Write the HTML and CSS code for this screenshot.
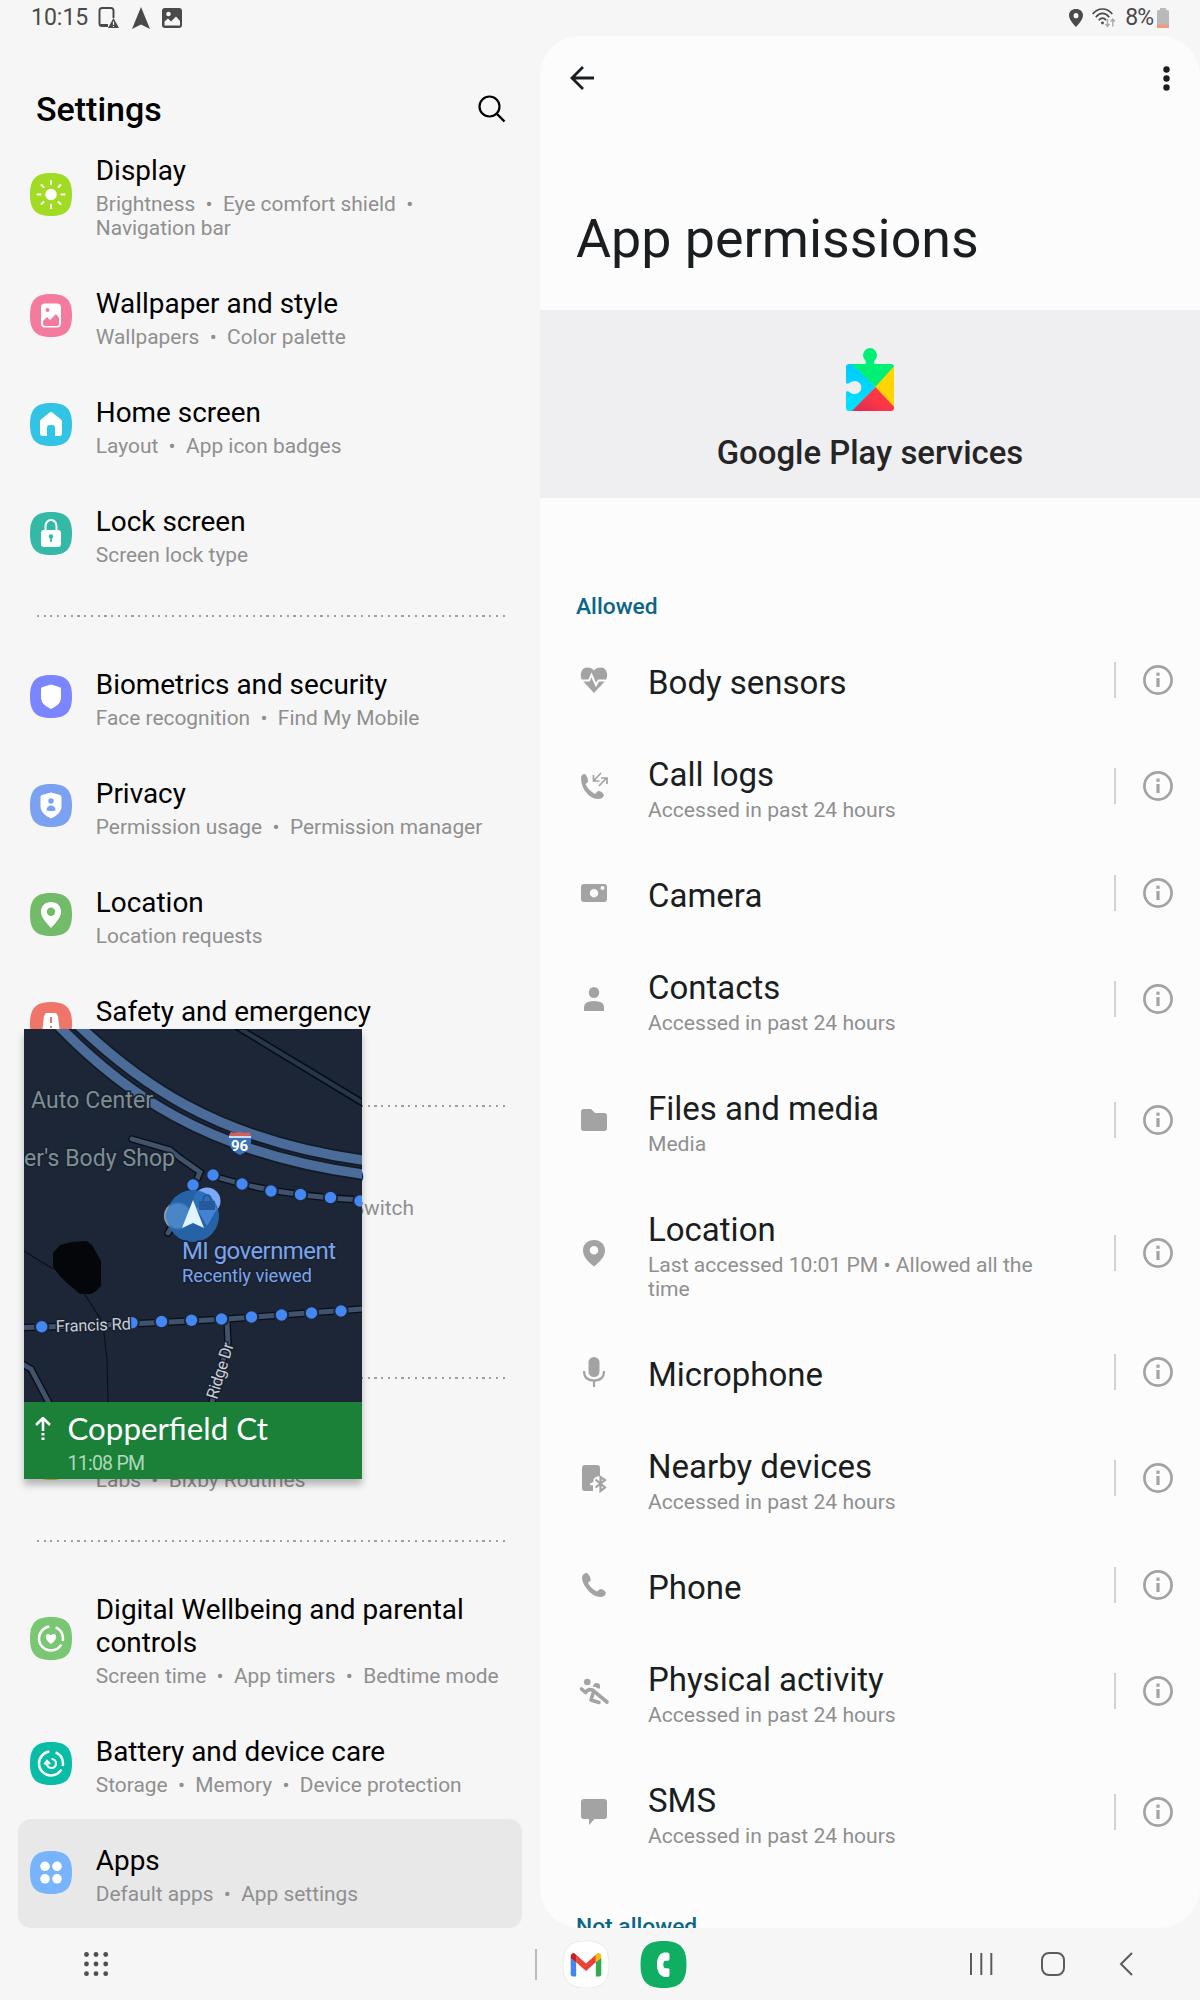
FILE: index.html
```html
<!DOCTYPE html>
<html lang="en">
<head>
<meta charset="utf-8">
<title>Settings</title>
<link rel="stylesheet" href="styles.css">
</head>
<body>
<svg class="defs" aria-hidden="true">
  <defs>
    <path id="squircle" d="M21 0C36 0 42 6 42 21.5S36 43 21 43S0 37 0 21.5S6 0 21 0z"/>
    <symbol id="info" viewBox="0 0 32 32"><circle cx="16" cy="16" r="13.6" fill="none" stroke="#a3a3a3" stroke-width="2.7"/><rect x="14.4" y="14" width="3.2" height="9" fill="#a3a3a3"/><rect x="14.4" y="8.6" width="3.2" height="3.2" fill="#a3a3a3"/></symbol>
  </defs>
</svg>
<header class="status">
  <div class="status-left">
    <span class="clock">10:15</span>
    <svg width="22" height="24" viewBox="0 0 22 24"><path d="M10 20H4a2.5 2.500 0 0 1-2.500-2.500V4.500A2.500 2.500 0 0 1 4 2h9a2.500 2.500 0 0 1 2.500 2.500V12" fill="none" stroke="#4a4a4a" stroke-width="2"/><path d="M2 18h8v3H4z" fill="#4a4a4a"/><path d="M15.500 12L21 22H10z" fill="#4a4a4a"/><path d="M15.500 15.500v3.500M15.500 20v1" stroke="#f6f6f6" stroke-width="1.200"/></svg>
    <svg width="18" height="22" viewBox="0 0 18 22"><path d="M9 0l9 22-9-4.500L0 22z" fill="#4a4a4a"/></svg>
    <svg width="20" height="20" viewBox="0 0 20 20"><rect width="20" height="20" rx="3" fill="#4a4a4a"/><circle cx="6.500" cy="6" r="2.300" fill="#f6f6f6"/><path d="M2.500 13.500l3.500-3 3 3 5-5 4 4.500v4.500h-15.500z" fill="#f6f6f6"/></svg>
  </div>
  <div class="status-right">
    <svg width="14" height="18" viewBox="0 0 15 22" preserveAspectRatio="none"><path fill-rule="evenodd" d="M7.500 0C3 0 0 3.200 0 7.500 0 12.500 4.500 18 7.500 22 10.500 18 15 12.500 15 7.500 15 3.200 12 0 7.500 0zm0 5a2.600 3.200 0 1 1 0 6.400 2.600 3.200 0 0 1 0-6.400z" fill="#4a4a4a"/></svg>
    <svg class="wifi" width="24" height="20" viewBox="0 0 24 20"><g fill="none" stroke="#4a4a4a" stroke-width="1.700"><path d="M.7 6C6-.7 15-.7 20.300 6"/><path d="M3.800 9.200C8 4.200 13 4.200 17.200 9.200"/><path d="M6.800 12.300C9.200 9.500 11.800 9.500 14.200 12.300"/></g><circle cx="10.500" cy="15" r="1.400" fill="#4a4a4a"/><path d="M15.500 11v7.500m-2-2.500l2 2.500 2-2.500M20.800 18.500V11m-2 2.500l2-2.500 2 2.500" fill="none" stroke="#aaa" stroke-width="1.400"/></svg>
    <span class="percent">8%</span>
    <svg width="12" height="20" viewBox="0 0 12 20"><path d="M3 0h6v3H3z" fill="#b9b9b9"/><rect y="2" width="12" height="18" rx="1.500" fill="#b9b9b9"/><path d="M0 16.500h12v2.500q0 1-1 1H1q-1 0-1-1z" fill="#ee9a80"/></svg>
  </div>
</header>
<main class="panes">
  <section class="settings">
    <div class="settings-head">
      <h1>Settings</h1>
      <svg width="28" height="28" viewBox="0 0 28 28"><circle cx="11.500" cy="11.500" r="10" fill="none" stroke="#000" stroke-width="2.200"/><path d="M18.500 18.500l8 8" stroke="#000" stroke-width="2.400"/></svg>
    </div>
    <ul class="menu">
      <li class="item"><svg class="badge" viewBox="0 0 42 43"><use href="#squircle" fill="#a2db24"/><g stroke="#fff" stroke-width="2" stroke-linecap="round"><circle cx="21" cy="21.500" r="5.800" fill="#fff" stroke="none"/><path d="M21 8v3M21 32v3M7.500 21.500h3M31.500 21.500h3M11.500 12l2 2M28.500 29l2 2M11.500 31l2-2M28.500 14l2-2"/></g></svg><div class="text"><h2>Display</h2><p>Brightness &nbsp;•&nbsp; Eye comfort shield &nbsp;•&nbsp;<br>Navigation bar</p></div></li>
      <li class="item"><svg class="badge" viewBox="0 0 42 43"><use href="#squircle" fill="#f47b9d"/><rect x="11" y="9.500" width="20" height="24" rx="4" fill="#fff"/><circle cx="17.500" cy="16" r="2" fill="#f47b9d"/><path d="M13 27l4-4 3 3 6-6 3 4v6q0 2-2 2H15q-2 0-2-2z" fill="#f47b9d"/></svg><div class="text"><h2>Wallpaper and style</h2><p>Wallpapers &nbsp;•&nbsp; Color palette</p></div></li>
      <li class="item"><svg class="badge" viewBox="0 0 42 43"><use href="#squircle" fill="#32c4e5"/><path d="M21 9q1 0 2 1l8 6.500q1 1 1 2V30q0 3-3 3h-4v-8q0-3-3-3h-2q-3 0-3 3v8h-4q-3 0-3-3V18.500q0-1 1-2L19 10q1-1 2-1z" fill="#fff"/></svg><div class="text"><h2>Home screen</h2><p>Layout &nbsp;•&nbsp; App icon badges</p></div></li>
      <li class="item"><svg class="badge" viewBox="0 0 42 43"><use href="#squircle" fill="#34b9a6"/><path d="M15.500 20v-6a5.500 6 0 0 1 11 0v6" fill="none" stroke="#fff" stroke-width="2"/><rect x="11" y="18" width="20" height="17" rx="3" fill="#fff"/><circle cx="21" cy="24.500" r="2.200" fill="#34b9a6"/><path d="M21 25v5" stroke="#34b9a6" stroke-width="1.800"/></svg><div class="text"><h2>Lock screen</h2><p>Screen lock type</p></div></li>
      <li class="rule"></li>
      <li class="item"><svg class="badge" viewBox="0 0 42 43"><use href="#squircle" fill="#7b85ff"/><path d="M21 9.500l8.500 2.500q1.500.500 1.500 2v8c0 6-4 9-10 12-6-3-10-6-10-12v-8q0-1.500 1.500-2z" fill="#fff"/></svg><div class="text"><h2>Biometrics and security</h2><p>Face recognition &nbsp;•&nbsp; Find My Mobile</p></div></li>
      <li class="item"><svg class="badge" viewBox="0 0 42 43"><use href="#squircle" fill="#7aa2f0"/><path d="M21 8.500l9 2.500q1.500.500 1.500 2v9c0 6-4.500 9.500-10.500 12.500-6-3-10.500-6.500-10.500-12.500v-9q0-1.500 1.500-2z" fill="#fff"/><circle cx="21" cy="17" r="2.700" fill="#7aa2f0"/><path d="M16.500 26c0-6 9-6 9 0q0 1-4.500 1t-4.500-1z" fill="#7aa2f0"/></svg><div class="text"><h2>Privacy</h2><p>Permission usage &nbsp;•&nbsp; Permission manager</p></div></li>
      <li class="item"><svg class="badge" viewBox="0 0 42 43"><use href="#squircle" fill="#72bb69"/><path fill-rule="evenodd" d="M21 9C15 9 11 13 11 18.500 11 25 17 30.500 21 35 25 30.500 31 25 31 18.500 31 13 27 9 21 9zm0 5.500a4.200 4.200 0 1 1 0 8.400 4.200 4.200 0 0 1 0-8.400z" fill="#fff"/></svg><div class="text"><h2>Location</h2><p>Location requests</p></div></li>
      <li class="item"><svg class="badge" viewBox="0 0 42 43"><use href="#squircle" fill="#ef7569"/><path d="M16 11h10l2 3 2 17H12l2-17z" fill="#fff"/><path d="M21 15v6M21 24v2" stroke="#ef7569" stroke-width="2"/></svg><div class="text"><h2>Safety and emergency</h2><p>Medical info</p></div></li>
      <li class="rule"></li>
      <li class="item"><svg class="badge" viewBox="0 0 42 43"><use href="#squircle" fill="#5a8df0"/></svg><div class="text"><h2>Accounts and backup</h2><p>Manage accounts &nbsp;•&nbsp; Smart Switch</p></div></li>
      <li class="item"><svg class="badge" viewBox="0 0 42 43"><use href="#squircle" fill="#5a8df0"/></svg><div class="text"><h2>Google</h2><p>Google services</p></div></li>
      <li class="rule"></li>
      <li class="item"><svg class="badge" viewBox="0 0 42 43"><use href="#squircle" fill="#f0c22e"/></svg><div class="text"><h2>Advanced features</h2><p>Labs &nbsp;•&nbsp; Bixby Routines</p></div></li>
      <li class="rule"></li>
      <li class="item"><svg class="badge" viewBox="0 0 42 43"><use href="#squircle" fill="#79c772"/><circle cx="21" cy="21.500" r="12" fill="none" stroke="#fff" stroke-width="2.500" stroke-dasharray="17 4 48 6.400" stroke-dashoffset="14.500"/><path d="M21 27c-7-5-6-10-2.500-10Q20 17 21 18.500 22 17 23.500 17c3.500 0 4.500 5-2.500 10z" fill="#fff"/></svg><div class="text"><h2>Digital Wellbeing and parental controls</h2><p>Screen time &nbsp;•&nbsp; App timers &nbsp;•&nbsp; Bedtime mode</p></div></li>
      <li class="item"><svg class="badge" viewBox="0 0 42 43"><use href="#squircle" fill="#09bca5"/><circle cx="21" cy="21.500" r="12" fill="none" stroke="#fff" stroke-width="2.500" stroke-dasharray="17 4 48 6.400" stroke-dashoffset="14.500"/><path d="M17 21.500a4.500 4.500 0 1 0 4.500-4.500M14.500 22.500l2.500-3.500 3 3" fill="none" stroke="#fff" stroke-width="2.200"/></svg><div class="text"><h2>Battery and device care</h2><p>Storage &nbsp;•&nbsp; Memory &nbsp;•&nbsp; Device protection</p></div></li>
      <li class="item selected"><svg class="badge" viewBox="0 0 42 43"><use href="#squircle" fill="#78b3fd"/><g fill="#fff"><circle cx="15" cy="15.300" r="4.800"/><circle cx="27" cy="15.300" r="4.800"/><circle cx="15" cy="27.800" r="4.800"/><circle cx="27" cy="27.800" r="4.800"/></g></svg><div class="text"><h2>Apps</h2><p>Default apps &nbsp;•&nbsp; App settings</p></div></li>
    </ul>
  </section>
  <section class="detail">
    <div class="toolbar">
      <svg width="25" height="24" viewBox="0 0 25 24"><path d="M13 1L2 12l11 11M2 12h22" fill="none" stroke="#1b1e20" stroke-width="2.800"/></svg>
      <svg width="7" height="25" viewBox="0 0 7 25"><g fill="#1b1e20"><circle cx="3.500" cy="3.500" r="3.200"/><circle cx="3.500" cy="12.500" r="3.200"/><circle cx="3.500" cy="21.500" r="3.200"/></g></svg>
    </div>
    <h1>App permissions</h1>
    <div class="app">
      <svg width="50" height="64" viewBox="0 0 50 64">
        <defs>
          <clipPath id="piece"><path d="M4 16H20.500Q21.500 14 20 12A7 7 0 1 1 30 12Q28.500 14 29.500 16H46Q49 16 49 19V60Q49 63 46 63H4Q1 63 1 60V43.500Q3 42.500 5 44.500A7 6.500 0 1 0 5 34.500Q3 36.500 1 35V19Q1 16 4 16z"/></clipPath>
          <linearGradient id="cyan" x2="0" y2="1"><stop stop-color="#00c3ff"/><stop offset="1" stop-color="#00e2ff"/></linearGradient>
          <linearGradient id="red" x1="1" x2="0" y2="1"><stop stop-color="#ff3945"/><stop offset=".5" stop-color="#fb3745"/><stop offset="1" stop-color="#d8285a"/></linearGradient>
        </defs>
        <g clip-path="url(#piece)"><path d="M0 0V64H7L30.500 39 7 14z" fill="url(#cyan)"/><path d="M7 16V0H50V18L30.500 39z" fill="#00f076"/><path d="M50 17V61L30.500 39z" fill="#ffd400"/><path d="M6 64L30.500 39 51 61V64z" fill="url(#red)"/></g>
      </svg>
      <h2>Google Play services</h2>
    </div>
    <h3>Allowed</h3>
    <ul class="perms">
      <li><svg class="glyph" viewBox="0 0 30 30"><path d="M15 28L3 15C0 9 3 2.500 8 2.500q5 0 7 3 2-3 7-3c5 0 8 6.500 5 12.500z"/><path d="M1 15.500h9l2.500-5.500 4.500 10 2.500-4.500H29" fill="none" stroke="#fcfcfc" stroke-width="2"/></svg><div class="text"><h4>Body sensors</h4></div><svg class="info"><use href="#info"/></svg></li>
      <li><svg class="glyph" viewBox="0 0 30 30"><path d="M2 6Q3 3 6 3 9 6 9 11L6.500 13Q9 19 16 23l3-3q4 0 6 4-1 4-6 4Q12 28 6 20 2 14 2 6z"/><path d="M22 2l-7.500 8M14.500 4v6h6M20 15l7.500-8M22 7h6v6" fill="none" stroke="#a3a3a3" stroke-width="1.700"/></svg><div class="text"><h4>Call logs</h4><p>Accessed in past 24 hours</p></div><svg class="info"><use href="#info"/></svg></li>
      <li><svg class="glyph" viewBox="0 0 30 30"><path fill-rule="evenodd" d="M5 6h20q3 0 3 3v12q0 3-3 3H5q-3 0-3-3V9q0-3 3-3zm10 5a4.200 4.200 0 1 0 .01 0zM23.500 8a2 2 0 1 0 .01 0z"/></svg><div class="text"><h4>Camera</h4></div><svg class="info"><use href="#info"/></svg></li>
      <li><svg class="glyph" viewBox="0 0 30 30"><ellipse cx="15" cy="8.500" rx="5.200" ry="5.500"/><path d="M5 27v-4q0-6 10-6t10 6v4z"/></svg><div class="text"><h4>Contacts</h4><p>Accessed in past 24 hours</p></div><svg class="info"><use href="#info"/></svg></li>
      <li><svg class="glyph" viewBox="0 0 30 30"><path d="M5 4h7l4 4h9q3 0 3 3v12q0 3-3 3H5q-3 0-3-3V7q0-3 3-3z"/></svg><div class="text"><h4>Files and media</h4><p>Media</p></div><svg class="info"><use href="#info"/></svg></li>
      <li class="tall"><svg class="glyph" viewBox="0 0 30 30"><path fill-rule="evenodd" d="M15 2C8.500 2 4 6.500 4 12.500 4 19 9 23.500 15 28.500 21 23.500 26 19 26 12.500 26 6.500 21.500 2 15 2zm0 6a4.300 4.300 0 1 1 0 8.600A4.300 4.300 0 0 1 15 8z"/></svg><div class="text"><h4>Location</h4><p>Last accessed 10:01 PM • Allowed all the<br>time</p></div><svg class="info"><use href="#info"/></svg></li>
      <li><svg class="glyph" viewBox="0 0 30 30"><rect x="9.500" y="0" width="11" height="20" rx="5.500"/><path d="M5 14q0 9.500 10 9.500t10-9.500M15 23.500V30" fill="none" stroke="#a3a3a3" stroke-width="2.200"/></svg><div class="text"><h4>Microphone</h4></div><svg class="info"><use href="#info"/></svg></li>
      <li><svg class="glyph" viewBox="0 0 30 30"><path d="M6 2h12q3 0 3 3v8q-8 1-6.500 6L11 20.500v1.800h3V28H6q-3 0-3-3V5q0-3 3-3z"/><path d="M16.500 16.500l9.500 8-4.500 3.500V14l4.500 3-9.500 7.500" fill="none" stroke="#a3a3a3" stroke-width="2.200"/></svg><div class="text"><h4>Nearby devices</h4><p>Accessed in past 24 hours</p></div><svg class="info"><use href="#info"/></svg></li>
      <li><svg class="glyph" viewBox="0 0 30 30"><path d="M3 7Q4 3 8 3 12 6 11.500 11L9 12.500Q11 18 18 21.500l3-2.500q4 0 6 4-1 4-6 4-8-1-13-8Q3 13 3 7z"/></svg><div class="text"><h4>Phone</h4></div><svg class="info"><use href="#info"/></svg></li>
      <li><svg class="glyph" viewBox="0 0 30 30"><ellipse cx="8.300" cy="6" rx="3.300" ry="3.200"/><path d="M14 11q0-3 2.500-4 4-.5 4.500 2v3.500q-3 .5-4-1.500z"/><path d="M2.500 13l4 3.500q2.500-4 7-2.500L28 26M14 17.500l-2 6.500 8 2.500" fill="none" stroke="#a3a3a3" stroke-width="3.600" stroke-linecap="round" stroke-linejoin="round"/></svg><div class="text"><h4>Physical activity</h4><p>Accessed in past 24 hours</p></div><svg class="info"><use href="#info"/></svg></li>
      <li><svg class="glyph" viewBox="0 0 30 30"><path d="M5 2h20q3 0 3 3v14q0 3-3 3H15.500L10 28v-6H5q-3 0-3-3V5q0-3 3-3z"/></svg><div class="text"><h4>SMS</h4><p>Accessed in past 24 hours</p></div><svg class="info"><use href="#info"/></svg></li>
    </ul>
    <h3 class="second">Not allowed</h3>
  </section>
</main>
<nav class="navbar">
  <svg class="drawer" width="26" height="26" viewBox="0 0 26 26"><g fill="#4f4f4f"><circle cx="3.500" cy="3.500" r="2.400"/><circle cx="13" cy="3.500" r="2.400"/><circle cx="22.700" cy="3.500" r="2.400"/><circle cx="3.500" cy="13" r="2.400"/><circle cx="13" cy="13" r="2.400"/><circle cx="22.700" cy="13" r="2.400"/><circle cx="3.500" cy="22.700" r="2.400"/><circle cx="13" cy="22.700" r="2.400"/><circle cx="22.700" cy="22.700" r="2.400"/></g></svg>
  <span class="sep"></span>
  <svg class="gmail" width="46" height="47" viewBox="0 0 42 43"><use href="#squircle" fill="#fff" stroke="#e6e6e6" stroke-width=".8"/><path d="M7 15l5 4v13.500H9q-2 0-2-2z" fill="#4285f4"/><path d="M35 15l-5 4v13.500h3q2 0 2-2z" fill="#34a853"/><path d="M12 12.500l9 8 9-8v7l-9 8-9-8z" fill="#ea4335"/><path d="M7 14.500q0-3.500 3-3.500l2 1.500v7l-5-4z" fill="#c5221f"/><path d="M35 14.500q0-3.500-3-3.500l-2 1.500v7l5-4z" fill="#fbbc04"/></svg>
  <svg class="dialer" width="47" height="47" viewBox="0 0 42 43"><use href="#squircle" fill="#0fae63"/><path d="M26.500 12.500v4q0 1.500-1.500 1.500h-3q-2.500 3.500 0 7h3q1.500 0 1.500 1.500v4.500q0 2-2 2h-3q-6.500-2-6.500-11.500T21.500 10.500h3q2 0 2 2z" fill="#fff"/></svg>
  <div class="keys">
    <svg width="24" height="26" viewBox="0 0 24 26"><path d="M2 2v22M12.300 2v22M22.300 2v22" stroke="#5c5c5c" stroke-width="2"/></svg>
    <svg width="26" height="26" viewBox="0 0 26 26"><rect x="2" y="2" width="22" height="22" rx="7" fill="none" stroke="#5c5c5c" stroke-width="2"/></svg>
    <svg class="back" width="16" height="26" viewBox="0 0 16 26"><path d="M14 2L3 13l11 11" fill="none" stroke="#5c5c5c" stroke-width="2"/></svg>
  </div>
</nav>
<aside class="pip">
  <svg class="map" width="338" height="373" viewBox="0 0 338 373">
    <rect width="338" height="373" fill="#1c2636"/>
    <path d="M211 0L338 77V70L222 0z" fill="#26364a" stroke="#080d14" stroke-width="1.500"/>
    <g fill="none" stroke="#0b111b" stroke-width="1.200"><path d="M0 222l29 18M60 264l14 22q6 9 6 18l3 27 1 42"/></g>
    <path d="M29 224l7-8 12-3 15-1 5 4 9 16v25l-5 5-5 3H56L43 254l-8-8-6-8z" fill="#04060a"/>
    <g fill="none" stroke="#131b28" stroke-width="13"><path d="M30-8C95 60 180 125 345 146M50-8C110 50 190 112 345 132"/></g>
    <g fill="none" stroke="#4b6b98" stroke-width="9.500"><path d="M30-8C95 60 180 125 345 146M50-8C110 50 190 112 345 132"/></g>
    <g fill="none" stroke="#090e16" stroke-width="7.500" stroke-linecap="round"><path d="M108 110l38 11 10 8 20 14-5 12M144 204l6-10M196 149q60 18 142 22M0 298.500q110-3 203-8.500l135-10M203 292l1 22-16 59M-2 335l9 5 19 36"/></g>
    <g fill="none" stroke="#41536c" stroke-width="4.800" stroke-linecap="round"><path d="M108 110l38 11 10 8 20 14-5 12M144 204l6-10M196 149q60 18 142 22M0 298.500q110-3 203-8.500l135-10M203 292l1 22-16 59M-2 335l9 5 19 36"/></g>
    <g fill="#4387f5" stroke="#1c2636" stroke-width="4" paint-order="stroke"><circle cx="189" cy="146" r="5.700"/><circle cx="218" cy="155" r="5.700"/><circle cx="247" cy="162" r="5.700"/><circle cx="276.500" cy="165.500" r="5.700"/><circle cx="306.500" cy="168.500" r="5.700"/><circle cx="336" cy="172" r="5.700"/><circle cx="169" cy="156" r="5.700"/><circle cx="17.700" cy="297.700" r="5.700"/><circle cx="108" cy="293.700" r="5.700"/><circle cx="137.500" cy="292.500" r="5.700"/><circle cx="167.500" cy="291.300" r="5.700"/><circle cx="197.500" cy="290" r="5.700"/><circle cx="227.500" cy="288" r="5.700"/><circle cx="257.500" cy="286" r="5.700"/><circle cx="287.500" cy="284" r="5.700"/><circle cx="317" cy="282" r="5.700"/></g>
    <circle cx="154" cy="187" r="14" fill="#9a9fa5"/>
    <circle cx="183" cy="172" r="13.500" fill="#7baaf7"/>
    <circle cx="169" cy="187" r="26" fill="#2769b3" fill-opacity=".9"/>
    <circle cx="154" cy="187" r="12.500" fill="#4886c8"/>
    <path d="M183 197l-10-17a12 12 0 0 1 20 0z" fill="#4383d6"/>
    <path d="M179 173q0-7 4-7t4 7" fill="none" stroke="#24599c" stroke-width="2"/><path d="M175 172h16v9h-16z" fill="#24599c"/>
    <path d="M169 171l11 28-11-5-11 5z" fill="#e2f5ff"/>
    <path d="M205 106l2-3 3 1 6-1 6 1 3-1 2 3q2 15-11 20-13-5-11-20z" fill="#3a73bd"/><path d="M205 107l2-4 3 1 6-1 6 1 3-1 2 4z" fill="#d35e5b"/><path d="M205 108h22" stroke="#fff" stroke-width="1.500"/>
    <text class="route" x="215.500" y="121.500" text-anchor="middle">96</text>
    <g class="labels">
      <text class="poi" x="7" y="78.700" textLength="122">Auto Center</text>
      <text class="poi" x="0" y="136.700" textLength="151">er's Body Shop</text>
      <text class="place" x="158" y="229.700" textLength="154">MI government</text>
      <text class="note" x="158" y="253" textLength="130">Recently viewed</text>
      <text class="road" x="32" y="303" textLength="75" transform="rotate(-2 32 303)">Francis Rd</text>
      <text class="road" x="193" y="371" textLength="58" transform="rotate(-73 193 371)">Ridge Dr</text>
    </g>
  </svg>
  <div class="turn">
    <svg width="16" height="24" viewBox="0 0 16 24"><path d="M1 8l7-7 7 7M8 2v12" fill="none" stroke="#fff" stroke-width="2.600"/><path d="M6.500 16h3v2.500h-3zM6.500 20.500h3V23h-3z" fill="#fff"/></svg>
    <div><strong>Copperfield Ct</strong><span>11:08 PM</span></div>
  </div>
</aside>
</body>
</html>
```
FILE: styles.css
```css
* { box-sizing: border-box; }
body {
  margin: 0;
  width: 1200px;
  height: 2000px;
  overflow: hidden;
  position: relative;
  display: flex;
  flex-direction: column;
  background: #f6f6f6;
  color: #000;
  font-family: Roboto, sans-serif;
}
h1, h2, h3, h4, p, ul { margin: 0; padding: 0; }
ul { list-style: none; }
svg { display: block; flex: none; }
.defs { position: absolute; width: 0; height: 0; }

.status {
  flex: none;
  height: 36px;
  display: flex;
  justify-content: space-between;
  padding: 0 31px 0 31px;
  color: #4a4a4a;
  font-size: 23px;
  line-height: 34px;
}
.status-left, .status-right { display: flex; align-items: center; height: 36px; }
.clock { width: 67px; }
.status-left svg { margin-right: 12px; }
.status-right { gap: 9px; }
.status-right .percent { margin-right: -5px; letter-spacing: -1px; }

.panes { flex: none; height: 1892px; display: flex; }
.settings { width: 540px; height: 1892px; overflow: hidden; }
.settings-head {
  height: 93px;
  display: flex;
  align-items: flex-start;
  justify-content: space-between;
  padding: 52px 34px 0 36px;
}
.settings-head svg { margin-top: 7px; }
.settings-head h1 { font-size: 34px; font-weight: 500; line-height: 42px; }
.item {
  display: flex;
  align-items: center;
  min-height: 109px;
  margin: 0 18px;
  padding: 25px 0 22px 12px;
  border-radius: 13px;
}
.selected { background: #e8e8e8; }
.badge { width: 42px; height: 43px; margin: -5px 23.800px 0 0; }
.item h2 { font-size: 27.900px; font-weight: 400; line-height: 33px; margin-bottom: 5px; }
p { font-size: 20.900px; line-height: 24px; color: #8f8f8f; }
.rule {
  height: 54px;
  margin: 0 34px 0 36.500px;
  background: repeating-linear-gradient(90deg, #a0a0a0 0 2px, transparent 2px 6.750px) 0 26px / 100% 2px no-repeat;
}

.detail {
  width: 660px;
  height: 1892px;
  overflow: hidden;
  background: #fcfcfc;
  border-radius: 40px;
  color: #1b1e20;
}
.toolbar {
  height: 84px;
  display: flex;
  align-items: center;
  justify-content: space-between;
  padding: 0 30px;
}
.detail h1 { height: 190px; padding: 83px 0 0 36px; font-size: 53.800px; font-weight: 400; line-height: 72px; }
.app {
  height: 188px;
  display: flex;
  flex-direction: column;
  align-items: center;
  padding-top: 38px;
  background: #efeff1;
  color: #252525;
}
.app h2 { margin-top: 22px; font-size: 32.900px; font-weight: 500; line-height: 38px; }
.detail h3 { height: 136px; padding: 95px 0 0 36px; color: #0b6587; font-size: 22.800px; font-weight: 500; line-height: 28px; }
.detail h3.second { height: 90px; padding-top: 40px; }
.perms li { display: flex; align-items: center; padding: 29px 26px 24px 38px; min-height: 92px; }
.glyph { width: 32px; height: 30px; margin-top: -6px; fill: #a3a3a3; }
.perms .text { flex: 1; padding-left: 38px; }
.perms h4 { font-size: 33px; font-weight: 400; line-height: 39px; }
.perms p { margin-top: 4px; padding-bottom: 1px; font-size: 21.100px; }
.perms .tall .glyph, .perms .tall .info { margin-top: -7px; }
.info { width: 60px; height: 36px; margin-top: -6px; border-left: 2px solid #d2d2d2; padding: 2px 0 2px 26px; }

.navbar { height: 72px; display: flex; align-items: center; }
.drawer { margin-left: 83px; }
.sep { width: 2px; height: 31px; margin: 0 26px 0 426px; background: #bbb; }
.dialer { margin-left: 31px; }
.keys { flex: 1; display: flex; justify-content: flex-end; gap: 47px; padding-right: 66px; }
.back { margin-left: 5px; }

.pip {
  position: absolute;
  left: 24px;
  top: 1029px;
  width: 338px;
  height: 450px;
  box-shadow: 0 6px 7px rgba(0, 0, 0, .26);
}
.labels text { paint-order: stroke; stroke: #192130; stroke-width: 3px; }
.poi { font-size: 23px; fill: #7d8f94; }
.place { font-size: 24px; fill: #7ba4ee; }
.note { font-size: 18.500px; fill: #7ba4ee; }
.road { font-size: 16.500px; fill: #c9ced6; }
.route { font-size: 15px; font-weight: 700; fill: #fff; }
.turn { height: 77px; display: flex; padding: 7px 11px; background: #1b8139; color: #fff; }
.turn svg { margin-top: 8px; }
.turn div { display: flex; flex-direction: column; padding-left: 16.500px; }
.turn strong { font: 400 31.300px/38px Lato, sans-serif; }
.turn span { margin-top: 3px; font-size: 19.500px; line-height: 27px; letter-spacing: -.75px; color: #b0d8ba; }
```
